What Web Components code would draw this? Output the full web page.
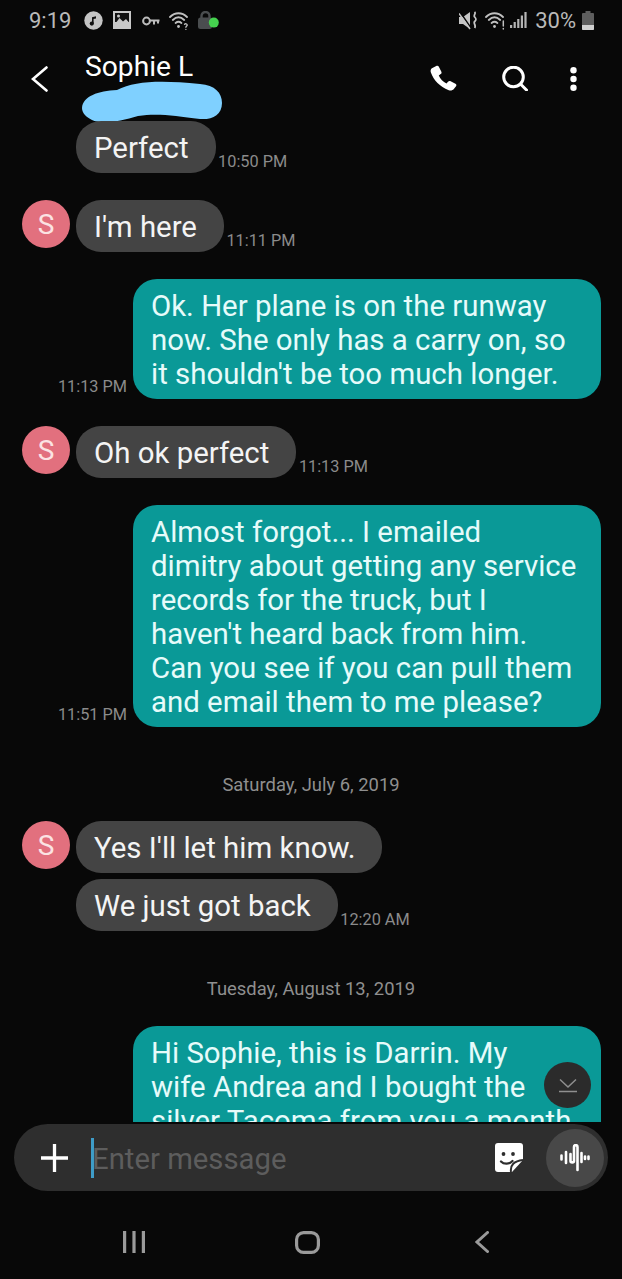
<!DOCTYPE html>
<html lang="en">
<head>
<meta charset="utf-8">
<title>Messages</title>
<style>
  html, body { margin: 0; padding: 0; background: #080808; }
  body { font-family: Roboto, "Liberation Sans", sans-serif; }
</style>
</head>
<body>
<sms-app>
  <sms-status-bar slot="status"></sms-status-bar>
  <sms-header slot="header" name="Sophie L"></sms-header>

  <sms-bubble time="10:50 PM" cont>Perfect</sms-bubble>
  <sms-bubble time="11:11 PM" avatar="S" gap>I'm here</sms-bubble>
  <sms-bubble time="11:13 PM" out gap>Ok. Her plane is on the runway<br>now. She only has a carry on, so<br>it shouldn't be too much longer.</sms-bubble>
  <sms-bubble time="11:13 PM" avatar="S" gap>Oh ok perfect</sms-bubble>
  <sms-bubble time="11:51 PM" out gap>Almost forgot... I emailed<br>dimitry about getting any service<br>records for the truck, but I<br>haven't heard back from him.<br>Can you see if you can pull them<br>and email them to me please?</sms-bubble>
  <sms-date>Saturday, July 6, 2019</sms-date>
  <sms-bubble avatar="S">Yes I'll let him know.</sms-bubble>
  <sms-bubble time="12:20 AM" cont near>We just got back</sms-bubble>
  <sms-date>Tuesday, August 13, 2019</sms-date>
  <sms-bubble out>Hi Sophie, this is Darrin. My<br>wife Andrea and I bought the<br>silver Tacoma from you a month</sms-bubble>

  <sms-scroll-down slot="overlay"></sms-scroll-down>
  <sms-composer slot="composer"></sms-composer>
  <sms-nav slot="nav"></sms-nav>
</sms-app>

<script>
class SmsApp extends HTMLElement {
  constructor() {
    super();
    this.attachShadow({ mode: 'open' }).innerHTML = `
      <style>
        :host { display: flex; flex-direction: column; height: 1279px; width: 622px; overflow: hidden; background: #080808; color: #fff; font-family: Roboto, "Liberation Sans", sans-serif; }
        .chat { position: relative; height: 1001px; flex: none; }
        .list { height: 100%; overflow: hidden; display: flex; flex-direction: column; }
      </style>
      <slot name="status"></slot>
      <slot name="header"></slot>
      <div class="chat">
        <div class="list"><slot></slot></div>
        <slot name="overlay"></slot>
      </div>
      <slot name="composer"></slot>
      <slot name="nav"></slot>`;
  }
}

class SmsStatusBar extends HTMLElement {
  constructor() {
    super();
    this.attachShadow({ mode: 'open' }).innerHTML = `
      <style>
        :host { display: flex; align-items: center; height: 40px; flex: none; padding: 0 28px 0 29px; color: #b9b9b9; font-size: 22px; }
        svg { display: block; flex: none; }
        .left, .right { display: flex; align-items: center; }
        .right { margin-left: auto; }
        .music { margin-left: 13px; }
        .image { margin-left: 10px; }
        .key { margin-left: 11px; margin-top: 1px; }
        .wifi { margin-left: 9px; }
        .lock { margin-left: 9px; }
        .wifi2 { margin-left: 7px; }
        .signal { margin-left: 5px; }
        .pct { margin-left: 8px; }
        .batt { margin-left: 6px; }
      </style>
      <div class="left">
        <span>9:19</span>
        <svg class="music" width="19" height="19" viewBox="0 0 19 19"><circle cx="9.500" cy="9.500" r="9.200" fill="#c4c4c4"/><path d="M8 12.500V6.200l4-1v2.200l-2.400.6v4.500z" fill="#111"/><circle cx="7.800" cy="12.600" r="2.100" fill="#111"/></svg>
        <svg class="image" width="18" height="18" viewBox="0 0 18 18"><rect width="18" height="18" fill="#c8c8c8"/><rect x="2" y="2" width="14" height="9" fill="#111"/><path d="M2 13l4.500-6 3.500 3.500 3-2.500 3 3.500V13z" fill="#c8c8c8"/><circle cx="5.500" cy="5" r="1.500" fill="#c8c8c8"/></svg>
        <svg class="key" width="18" height="10" viewBox="0 0 18 10" fill="none" stroke="#bcbcbc" stroke-width="2"><circle cx="4.500" cy="5" r="3.400"/><path d="M8 4.500h9.500M12 4.500v4M16 4.500v3"/></svg>
        <svg class="wifi" width="20" height="19" viewBox="0 0 20 19" fill="none" stroke="#c0c0c0" stroke-width="1.800" stroke-linecap="round"><path d="M1 6C6 1 13 1 18 6M3.800 9C7.500 5.500 11.500 5.500 15.200 9M6.600 12c2-1.700 3.800-1.700 5.800 0"/><circle cx="9.500" cy="15.500" r="1.400" fill="#c0c0c0" stroke="none"/><path d="M15.500 13.300c.8-1 2.800-.6 2.700.8-.1 1-1.200 1-1.300 2.200M16.900 18.400v.1" stroke-width="1.300"/></svg>
        <svg class="lock" width="21" height="18" viewBox="0 0 21 18"><path d="M3.500 7V5a4 4 0 0 1 8 0v2" fill="none" stroke="#4a4d4f" stroke-width="2.400"/><rect x="0" y="6.500" width="14" height="11.500" rx="2.500" fill="#4a4d4f"/><circle cx="15.800" cy="11.600" r="5" fill="#45d24f"/></svg>
      </div>
      <div class="right">
        <svg width="19" height="19" viewBox="0 0 19 19"><path d="M0 6h4l7-5v17l-7-5H0z" fill="#c6c6c6"/><path d="M1 1l11 16" stroke="#080808" stroke-width="1.500"/><path d="M0 2.500L11 18" stroke="#c6c6c6" stroke-width="1.500"/><path d="M15.500 1c2 1.600-1.500 3.200.2 5s1.800 2.800 0 4.500 1.700 3.500 0 6.500" fill="none" stroke="#c6c6c6" stroke-width="1.800"/></svg>
        <svg class="wifi2" width="20" height="19" viewBox="0 0 20 19" fill="none" stroke="#c0c0c0" stroke-width="1.800" stroke-linecap="round"><path d="M1 6C6 1 13 1 18 6M3.800 9C7.500 5.500 11.500 5.500 15.200 9M6.600 12c2-1.700 3.800-1.700 5.800 0"/><circle cx="9.500" cy="15.500" r="1.400" fill="#c0c0c0" stroke="none"/><path d="M18.300 10v5M18.300 17.500v.4" stroke-width="1.500"/></svg>
        <svg class="signal" width="17" height="18" viewBox="0 0 17 18" fill="#b4b4b4"><rect x="0" y="14" width="2.200" height="3"/><rect x="3.600" y="11" width="2.200" height="6"/><rect x="7.200" y="8" width="2.200" height="9"/><rect x="10.800" y="4.500" width="2.200" height="12.500"/><rect x="14.400" y="1" width="2.200" height="16"/></svg>
        <span class="pct">30%</span>
        <svg class="batt" width="12" height="19" viewBox="0 0 12 19"><path d="M3.500 0h5v2H11a1 1 0 0 1 1 1v15a1 1 0 0 1-1 1H1a1 1 0 0 1-1-1V3a1 1 0 0 1 1-1h2.500z" fill="#5e5e5e"/><path d="M0 14h12v4a1 1 0 0 1-1 1H1a1 1 0 0 1-1-1z" fill="#d0d0d0"/></svg>
      </div>`;
  }
}

class SmsHeader extends HTMLElement {
  constructor() {
    super();
    this.attachShadow({ mode: 'open' }).innerHTML = `
      <style>
        :host { display: flex; position: relative; height: 81px; flex: none; padding: 0 45px 0 31px; box-sizing: border-box; }
        svg { display: block; flex: none; }
        .back { margin-top: 26px; }
        .name { margin: 9px 0 0 37px; font-size: 28.2px; line-height: 36px; color: #fff; }
        .actions { margin: 25px 0 0 auto; display: flex; align-items: flex-start; }
        .search { margin: 1px 0 0 45px; }
        .dots { margin: 2px 0 0 42px; }
        .scribble { position: absolute; left: 0; top: 0; overflow: visible; }
      </style>
      <svg class="back" width="17" height="26" viewBox="0 0 17 26" fill="none" stroke="#fff" stroke-width="2.600" stroke-linecap="round"><path d="M15.500 1.500L2 13l13.500 11.500"/></svg>
      <div class="name"></div>
      <svg class="scribble" width="622" height="81" viewBox="0 40 622 81"><path d="M82 108C83 96 98 91 117 90 135 81 160 80 200 84 215 85 222 93 222 103 222 115 212 120 200 119 175 116 158 113 138 116 120 122 100 124 92 120 86 117 82 113 82 108Z" fill="#7fd0ff"/></svg>
      <div class="actions">
        <svg width="27" height="27" viewBox="0 0 28 30" preserveAspectRatio="none" fill="#fff"><path d="M6.500 1.200L2 3.500C.5 4.500.3 6.500 1 8.500 4 17 10 23.700 19.500 28c2 .8 4 .2 5.200-1.300l2.300-3c.7-1 .5-2.200-.6-2.800l-5-2.800c-1-.5-2-.3-2.700.5l-1.600 2c-3.600-2-6.400-5.100-8-9l2-1.500c.9-.7 1.100-1.700.7-2.700L9.200 2c-.5-1.100-1.700-1.400-2.700-.8z"/></svg>
        <svg class="search" width="26" height="25" viewBox="0 0 26 25" fill="none" stroke="#fff" stroke-width="3"><circle cx="11.500" cy="11" r="9.800"/><path d="M18.500 18l6 6" stroke-linecap="round"/></svg>
        <svg class="dots" width="7" height="24" viewBox="0 0 7 24" fill="#fff"><circle cx="3.500" cy="3.300" r="3.200"/><circle cx="3.500" cy="12" r="3.200"/><circle cx="3.500" cy="20.700" r="3.200"/></svg>
      </div>`;
    this.shadowRoot.querySelector('.name').textContent = this.getAttribute('name');
  }
}

class SmsBubble extends HTMLElement {
  constructor() {
    super();
    const time = this.getAttribute('time') || '';
    const avatar = this.getAttribute('avatar');
    this.attachShadow({ mode: 'open' }).innerHTML = `
      <style>
        :host { display: flex; flex: none; align-items: flex-end; padding: 0 21px 0 22px; }
        :host([gap]) { margin-top: 27px; }
        :host([near]) { margin-top: 6px; }
        :host([cont]) { padding-left: 76px; }
        :host([out]) { justify-content: flex-end; }
        .avatar { align-self: flex-start; width: 48px; height: 48px; margin-right: 6px; border-radius: 50%; background: #e2707e; color: #fbe3e3; font-size: 28px; display: flex; align-items: center; justify-content: center; }
        .bubble { background: #444444; color: #f4f4f4; border-radius: 25px; padding: 10px 27px 8px 18px; font-size: 29.4px; line-height: 34px; white-space: nowrap; }
        :host([out]) .bubble { background: #0a9997; color: #e6fbfa; box-sizing: border-box; width: 468px; border-radius: 24px; overflow: hidden; }
        .time { color: #8b8b8b; font-size: 16.3px; line-height: 19px; margin: 0 0 2px 2.5px; white-space: nowrap; }
        :host([out]) .time { margin: 0 6px 3px 0; }
      </style>
      ${avatar ? `<div class="avatar">${avatar}</div>` : ''}
      ${this.hasAttribute('out') && time ? `<div class="time">${time}</div>` : ''}
      <div class="bubble"><slot></slot></div>
      ${!this.hasAttribute('out') && time ? `<div class="time">${time}</div>` : ''}`;
  }
}

class SmsDate extends HTMLElement {
  constructor() {
    super();
    this.attachShadow({ mode: 'open' }).innerHTML = `
      <style>
        :host { display: block; flex: none; text-align: center; color: #8f8f8f; font-size: 18.4px; line-height: 24px; padding: 45.5px 0 24.9px; }
      </style>
      <slot></slot>`;
  }
}

class SmsScrollDown extends HTMLElement {
  constructor() {
    super();
    this.attachShadow({ mode: 'open' }).innerHTML = `
      <style>
        :host { position: absolute; right: 31px; bottom: 14px; width: 47px; height: 46px; border-radius: 50%; background: #2b2b2b; display: flex; align-items: center; justify-content: center; }
        svg { display: block; }
      </style>
      <svg width="20" height="15" viewBox="0 0 20 15" fill="none" stroke="#8f8f8f" stroke-width="1.500"><path d="M2 1.500l8 7.500 8-7.500M1 13.500h18"/></svg>`;
  }
}

class SmsComposer extends HTMLElement {
  constructor() {
    super();
    this.attachShadow({ mode: 'open' }).innerHTML = `
      <style>
        :host { display: flex; flex: none; align-items: center; box-sizing: border-box; width: 594px; height: 67px; margin: 2px 0 0 14px; padding: 0 4px 0 27px; border-radius: 33.500px; background: #2e2e2e; }
        svg { display: block; flex: none; }
        .caret { width: 3px; height: 40px; margin-left: 23px; background: #3e9cc8; flex: none; }
        .ph { color: #5d5d5d; font-size: 29.300px; line-height: 36px; padding-top: 2px; margin-left: -2px; flex: 1; }
        .voice { width: 58px; height: 58px; border-radius: 50%; background: #484848; display: flex; align-items: center; justify-content: center; margin-left: 23px; flex: none; }
      </style>
      <svg width="27" height="28" viewBox="0 0 27 28" stroke="#fff" stroke-width="3.300"><path d="M13.500 0v28M0 14h27"/></svg>
      <div class="caret"></div>
      <div class="ph">Enter message</div>
      <svg width="28" height="29" viewBox="0 0 28 29"><path d="M3 0h22a3 3 0 0 1 3 3v14L17 29H3a3 3 0 0 1-3-3V3a3 3 0 0 1 3-3z" fill="#fff"/><circle cx="8.500" cy="11" r="1.900" fill="#2e2e2e"/><circle cx="18" cy="11" r="1.900" fill="#2e2e2e"/><path d="M6 18.500c3 3 8 3 11.500-.5" fill="none" stroke="#2e2e2e" stroke-width="2.300" stroke-linecap="round"/><path d="M16 29c-1-7 3-11 12-12" fill="none" stroke="#2e2e2e" stroke-width="2"/></svg>
      <div class="voice">
        <svg width="30" height="28" viewBox="0 0 30 28" fill="none" stroke="#fff" stroke-width="2.600" stroke-linecap="round"><path d="M1.500 11.500v4M6 8v11M10.500 10v7c0 2 3.500 2 3.500 0V3c0-2.500 3.500-2.500 3.500 0v23M21.500 9v9M25 12.500v2.500M28.500 12.500v2.500"/></svg>
      </div>`;
  }
}

class SmsNav extends HTMLElement {
  constructor() {
    super();
    this.attachShadow({ mode: 'open' }).innerHTML = `
      <style>
        :host { display: flex; flex: none; align-items: center; height: 88px; box-sizing: border-box; padding: 26px 0 12px 123px; }
        svg { display: block; flex: none; }
        .home { margin: 0 155px 0 150px; }
      </style>
      <svg width="22" height="22" viewBox="0 0 22 22" stroke="#9a9a9a" stroke-width="3.200"><path d="M1.600 0v22M11 0v22M20.400 0v22"/></svg>
      <svg class="home" width="25" height="23" viewBox="0 0 25 23" fill="none" stroke="#9a9a9a" stroke-width="3.200"><rect x="1.600" y="1.600" width="21.800" height="19.800" rx="7"/></svg>
      <svg width="14" height="22" viewBox="0 0 14 22" fill="none" stroke="#9a9a9a" stroke-width="3" stroke-linecap="round"><path d="M12.500 1.500L2 11l10.500 9.500"/></svg>`;
  }
}

customElements.define('sms-app', SmsApp);
customElements.define('sms-status-bar', SmsStatusBar);
customElements.define('sms-header', SmsHeader);
customElements.define('sms-bubble', SmsBubble);
customElements.define('sms-date', SmsDate);
customElements.define('sms-scroll-down', SmsScrollDown);
customElements.define('sms-composer', SmsComposer);
customElements.define('sms-nav', SmsNav);
</script>
</body>
</html>
